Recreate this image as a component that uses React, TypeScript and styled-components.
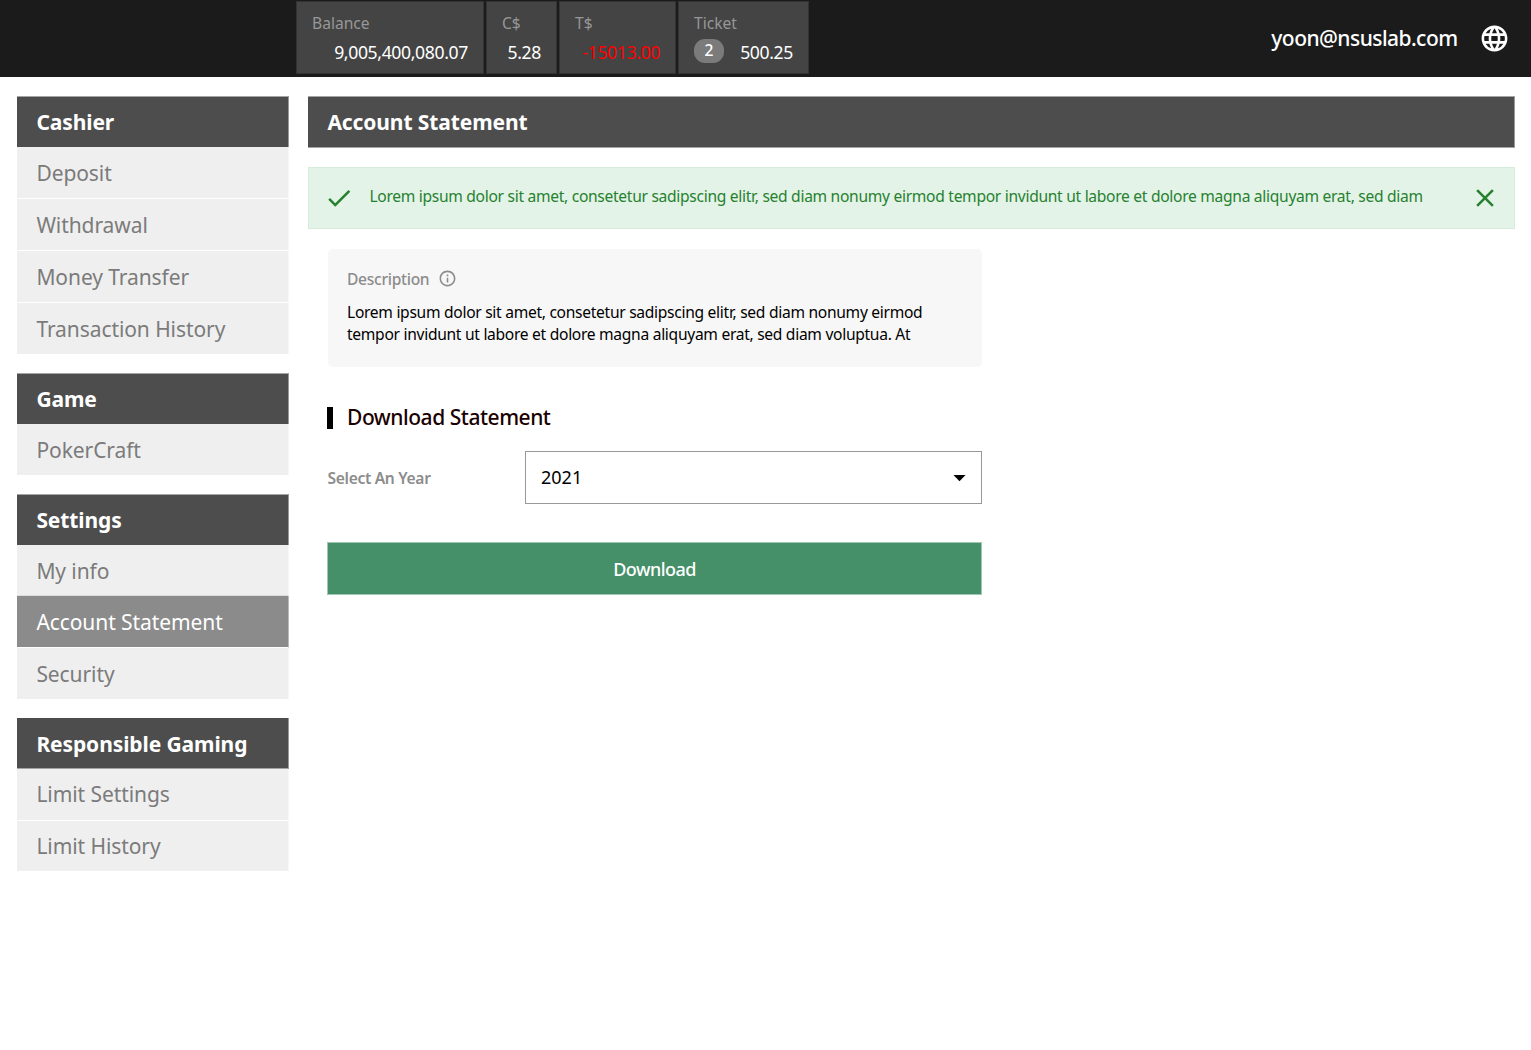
import React from "react";
import styled, { createGlobalStyle } from "styled-components";
import { MdArrowDropDown, MdCheck, MdClose, MdInfoOutline, MdLanguage } from "react-icons/md";

const GlobalStyle = createGlobalStyle`
  * { box-sizing: border-box; }
  body {
    margin: 0;
    background: #fff;
    font-family: "Noto Sans", sans-serif;
  }
  svg { flex: none; }
`;

const Page = styled.div`
  width: 1531px;
  min-height: 1050px;
`;

const TopBar = styled.header`
  display: flex;
  justify-content: space-between;
  height: 77px;
  padding: 1px 21px 4px 296px;
  background: #1b1b1b;
`;

const Wallets = styled.div`
  display: flex;
  gap: 2px;
`;

const Wallet = styled.div<{ $width: number }>`
  display: flex;
  flex-direction: column;
  width: ${(p) => p.$width}px;
  height: 73px;
  padding: 11px 15px 0;
  background: #444;
  border: 1px solid #333;
`;

const WalletLabel = styled.span`
  font-size: 15.6px;
  line-height: 21px;
  color: #979797;
`;

const WalletRow = styled.div`
  display: flex;
  align-items: center;
  justify-content: flex-end;
  height: 24px;
  margin-top: 6px;
`;

const Amount = styled.span<{ $negative?: boolean }>`
  font-size: 17.6px;
  font-weight: 400;
  letter-spacing: -0.36px;
  line-height: 24px;
  color: ${(p) => (p.$negative ? "#ff0000" : "#fff")};
`;

const TicketCount = styled.span`
  width: 30px;
  height: 24px;
  margin: -3px auto 0 0;
  border-radius: 11px;
  background: #7b7b7b;
  color: #fff;
  font-size: 15.6px;
  font-weight: 500;
  line-height: 22px;
  text-align: center;
`;

const Account = styled.div`
  display: flex;
  align-items: center;
  gap: 21.5px;
  height: 74px;
  color: #fff;
  font-size: 21px;
  font-weight: 500;
  letter-spacing: -0.55px;
`;

const AccountName = styled.span`
  line-height: 28px;
  padding-bottom: 1px;
`;

const Body = styled.div`
  display: flex;
  gap: 19px;
  padding: 19px 16px 0 17px;
`;

const Sidebar = styled.nav`
  width: 272px;
`;

const Section = styled.section<{ $gap: number }>`
  margin-bottom: ${(p) => p.$gap}px;
`;

const SectionTitle = styled.h2<{ $edge: "top" | "bottom" | "both" }>`
  margin: 0;
  height: ${(p) => (p.$edge === "both" ? 52 : 51)}px;
  padding-left: 19.4px;
  border-right: 1px solid #999;
  border-top: ${(p) => (p.$edge === "bottom" ? "0" : "1px solid #a4a4a4")};
  border-bottom: ${(p) => (p.$edge === "top" ? "0" : "1px solid #a4a4a4")};
  background: #4d4d4d;
  color: #fff;
  font-size: 21px;
  font-weight: 700;
  line-height: ${(p) => (p.$edge === "bottom" ? 52 : 50)}px;
  letter-spacing: -0.1px;
`;

const NavItem = styled.a<{ $active?: boolean; $last?: boolean; $flush?: boolean; $compact?: boolean }>`
  display: block;
  height: ${(p) => (p.$compact && p.$last ? 50 : p.$last || p.$flush ? 51 : 52)}px;
  padding-left: 19.4px;
  border-right: 1px solid ${(p) => (p.$active ? "#bbb" : "#f7f7f7")};
  border-bottom: ${(p) => (p.$last ? "0" : p.$flush ? "1px solid #dcdcdc" : "1px solid #fff")};
  background: ${(p) => (p.$active ? "#8b8b8b" : "#efefef")};
  color: ${(p) => (p.$active ? "#fff" : "#7b7b7b")};
  font-size: 21px;
  line-height: ${(p) => (p.$compact ? 51 : 53)}px;
  letter-spacing: -0.08px;
`;

const Main = styled.main`
  display: flex;
  flex-direction: column;
  width: 1207px;
`;

const Alert = styled.div`
  display: flex;
  align-items: center;
  height: 62px;
  margin-top: 19px;
  padding: 0 14px 0 15.3px;
  background: #e3f3e7;
  border: 1px solid #d5ecdb;
  color: #26812f;
`;

const AlertText = styled.p`
  flex: 1;
  margin: 0 0 4px 15.1px;
  font-size: 15.6px;
  line-height: 22px;
  letter-spacing: -0.298px;
  white-space: nowrap;
`;

const Content = styled.div`
  width: 655px;
  margin: 20px 0 0 19px;
`;

const Card = styled.section`
  height: 118px;
  margin-left: 1px;
  padding: 19px;
  background: #f7f7f7;
  border-radius: 5px;
`;

const CardTitle = styled.h3`
  display: flex;
  align-items: center;
  gap: 8.5px;
  height: 21px;
  margin: 0;
  color: #8c8c8c;
  font-size: 15.6px;
  font-weight: 500;
  letter-spacing: -0.29px;
`;

const CardText = styled.p`
  margin: 12px 0 0;
  color: #000;
  font-size: 15.6px;
  line-height: 22px;
  letter-spacing: -0.295px;
  white-space: nowrap;
`;

const Heading = styled.h3`
  height: 22px;
  margin: 40px 0 0;
  padding-left: 14px;
  border-left: 6px solid #000;
  color: #1a0000;
  font-size: 21px;
  font-weight: 500;
  line-height: 21px;
  letter-spacing: -0.46px;
`;

const Field = styled.div`
  display: flex;
  align-items: center;
  justify-content: space-between;
  margin-top: 22px;
`;

const FieldLabel = styled.label`
  padding-left: 0.5px;
  color: #8c8c8c;
  font-size: 15.6px;
  font-weight: 600;
  letter-spacing: -0.32px;
`;

const Select = styled.div`
  display: flex;
  align-items: center;
  justify-content: space-between;
  width: 457px;
  height: 53px;
  padding: 0 7.5px 0 15px;
  border: 1px solid #999;
  background: #fff;
  color: #000;
  font-size: 18px;
`;

const SelectValue = styled.span`
  padding-bottom: 2px;
`;

const Button = styled.button`
  display: block;
  width: 655px;
  height: 53px;
  margin: 38px 0 0;
  padding: 0;
  border: 1px solid #a2c7b4;
  background: #458f69;
  color: #fff;
  font-family: inherit;
  font-size: 18px;
  font-weight: 500;
  letter-spacing: -0.55px;
`;

type Group = {
  title: string;
  edge: "top" | "bottom" | "both";
  gap: number;
  items: string[];
};

const groups: Group[] = [
  { title: "Cashier", edge: "top", gap: 19, items: ["Deposit", "Withdrawal", "Money Transfer", "Transaction History"] },
  { title: "Game", edge: "top", gap: 19, items: ["PokerCraft"] },
  { title: "Settings", edge: "top", gap: 19, items: ["My info", "Account Statement", "Security"] },
  { title: "Responsible Gaming", edge: "bottom", gap: 0, items: ["Limit Settings", "Limit History"] },
];

export default function App() {
  return (
    <Page>
      <GlobalStyle />
      <TopBar>
        <Wallets>
          <Wallet $width={188}>
            <WalletLabel>Balance</WalletLabel>
            <WalletRow><Amount>9,005,400,080.07</Amount></WalletRow>
          </Wallet>
          <Wallet $width={71}>
            <WalletLabel>C$</WalletLabel>
            <WalletRow><Amount>5.28</Amount></WalletRow>
          </Wallet>
          <Wallet $width={117}>
            <WalletLabel>T$</WalletLabel>
            <WalletRow><Amount $negative>-15013.00</Amount></WalletRow>
          </Wallet>
          <Wallet $width={131}>
            <WalletLabel>Ticket</WalletLabel>
            <WalletRow>
              <TicketCount>2</TicketCount>
              <Amount>500.25</Amount>
            </WalletRow>
          </Wallet>
        </Wallets>
        <Account>
          <AccountName>yoon@nsuslab.com</AccountName>
          <MdLanguage size={31} />
        </Account>
      </TopBar>
      <Body>
        <Sidebar>
          {groups.map((g) => (
            <Section key={g.title} $gap={g.gap}>
              <SectionTitle $edge={g.edge}>{g.title}</SectionTitle>
              {g.items.map((item, i) => (
                <NavItem
                  key={item}
                  $active={item === "Account Statement"}
                  $flush={item === "My info"}
                  $compact={g.edge === "bottom"}
                  $last={i === g.items.length - 1}
                >
                  {item}
                </NavItem>
              ))}
            </Section>
          ))}
        </Sidebar>
        <Main>
          <SectionTitle as="h1" $edge="both">Account Statement</SectionTitle>
          <Alert>
            <MdCheck size={30} />
            <AlertText>
              Lorem ipsum dolor sit amet, consetetur sadipscing elitr, sed diam nonumy eirmod tempor invidunt ut labore et dolore magna aliquyam erat, sed diam
            </AlertText>
            <MdClose size={30} />
          </Alert>
          <Content>
            <Card>
              <CardTitle>Description <MdInfoOutline size={19} /></CardTitle>
              <CardText>
                Lorem ipsum dolor sit amet, consetetur sadipscing elitr, sed diam nonumy eirmod
                <br />
                tempor invidunt ut labore et dolore magna aliquyam erat, sed diam voluptua. At
              </CardText>
            </Card>
            <Heading>Download Statement</Heading>
            <Field>
              <FieldLabel>Select An Year</FieldLabel>
              <Select><SelectValue>2021</SelectValue><MdArrowDropDown size={29} /></Select>
            </Field>
            <Button>Download</Button>
          </Content>
        </Main>
      </Body>
    </Page>
  );
}
